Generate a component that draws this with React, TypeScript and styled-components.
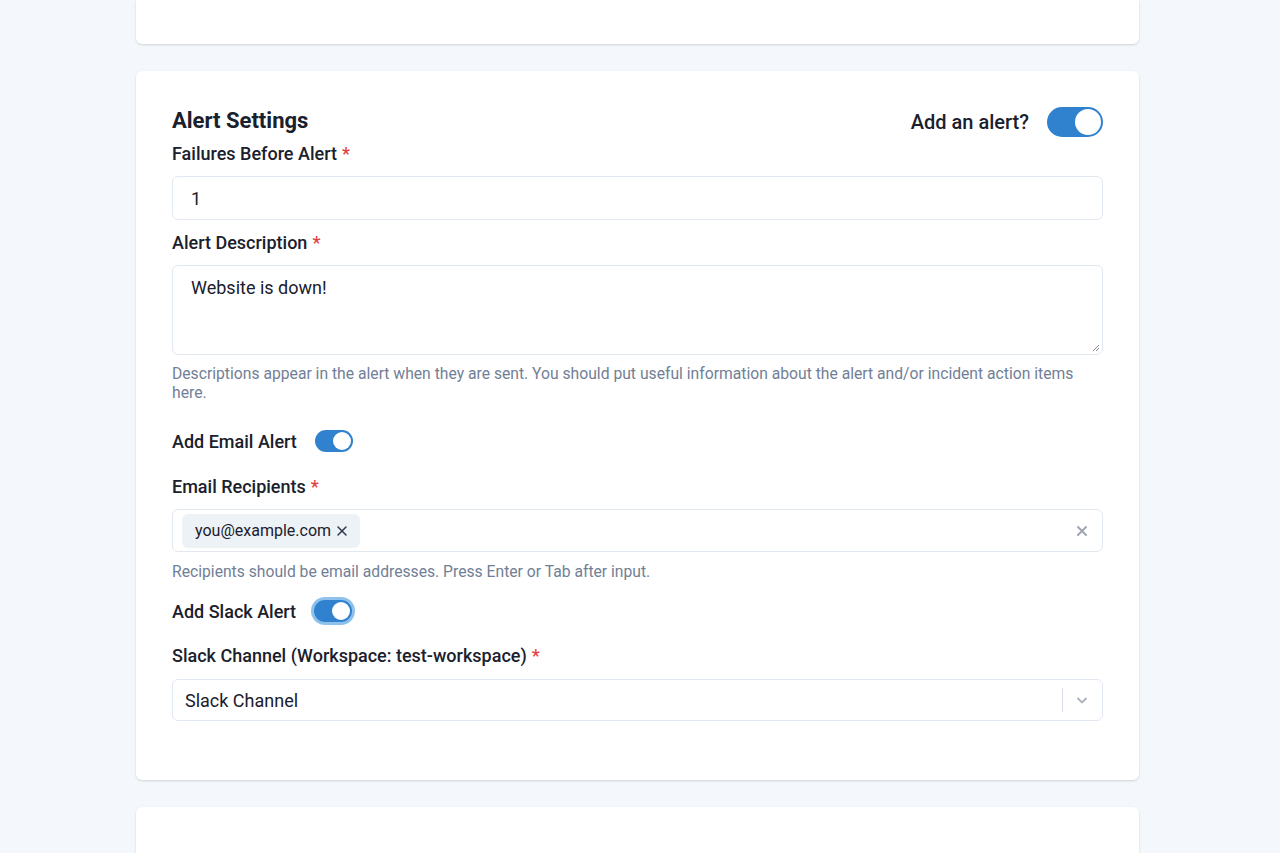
import React from "react";
import styled, { createGlobalStyle } from "styled-components";

const Global = createGlobalStyle`
  html, body { margin: 0; padding: 0; background: #f4f7fb; }
  body { font-family: Roboto, "Noto Sans", Arial, sans-serif; color: #1a202c; }
  * { box-sizing: border-box; }
`;

const Page = styled.div`
  display: flex;
  flex-direction: column;
  gap: 27px;
  padding-left: 136px;
  width: 1280px;
  height: 853px;
  overflow: hidden;
`;

const Card = styled.div<{ $h?: number; $top?: boolean }>`
  width: 1003px;
  flex: none;
  background: #fff;
  border-radius: ${(p) => (p.$top ? "0 0 6px 6px" : "6px")};
  box-shadow: 0 1px 3px rgba(0, 0, 0, 0.1), 0 1px 2px rgba(0, 0, 0, 0.06);
  ${(p) => (p.$h ? `height: ${p.$h}px;` : "")}
`;

const Body = styled.div`
  padding: 36px 36px 59px;
  display: flex;
  flex-direction: column;
`;

const Header = styled.div`
  display: flex;
  align-items: center;
  justify-content: space-between;
  height: 30px;
`;

const Title = styled.h2`
  margin: 0;
  font-size: 22px;
  font-weight: 700;
  line-height: 28px;
  margin-top: -3px;
  color: #1a202c;
`;

const HeaderRight = styled.div`
  display: flex;
  align-items: center;
  gap: 18px;
`;

const BigLabel = styled.span`
  font-size: 20px;
  font-weight: 500;
  color: #1a202c;
`;

const Track = styled.span<{ $size: "lg" | "md"; $focus?: boolean }>`
  display: inline-flex;
  align-items: center;
  justify-content: flex-end;
  width: ${(p) => (p.$size === "lg" ? 56 : 38)}px;
  height: ${(p) => (p.$size === "lg" ? 30 : 22)}px;
  padding: 2px;
  border-radius: 999px;
  background: #3182ce;
  box-shadow: ${(p) => (p.$focus ? "0 0 0 3px rgba(66, 153, 225, 0.6)" : "none")};
`;

const Thumb = styled.span<{ $size: "lg" | "md" }>`
  width: ${(p) => (p.$size === "lg" ? 26 : 18)}px;
  height: ${(p) => (p.$size === "lg" ? 26 : 18)}px;
  border-radius: 50%;
  background: #fff;
`;

const Label = styled.div<{ $mt: number; $mb?: number }>`
  font-size: 18px;
  font-weight: 500;
  line-height: 24px;
  margin-top: ${(p) => p.$mt}px;
  margin-bottom: ${(p) => p.$mb ?? 11}px;
  color: #1a202c;
`;

const Req = styled.span`
  color: #e53e3e;
  margin-left: 5px;
`;

const Field = styled.div<{ $h: number }>`
  height: ${(p) => p.$h}px;
  border: 1px solid #e2e8f0;
  border-radius: 6px;
  background: #fff;
  display: flex;
  align-items: center;
  font-size: 18px;
  color: #1a202c;
`;

const InputText = styled.span`
  padding-left: 18px;
`;

const TextArea = styled.div`
  position: relative;
  height: 90px;
  border: 1px solid #e2e8f0;
  border-radius: 6px;
  padding: 10px 18px;
  font-size: 18px;
  line-height: 24px;
  color: #1a202c;
`;

const Grip = styled.svg`
  position: absolute;
  right: 2px;
  bottom: 2px;
`;

const Help = styled.div<{ $mt?: number }>`
  margin-top: ${(p) => p.$mt ?? 9}px;
  font-size: 15.7px;
  line-height: 19px;
  color: #718096;
`;

const ToggleRow = styled.div<{ $mt: number; $h: number }>`
  display: flex;
  align-items: center;
  gap: 18px;
  margin-top: ${(p) => p.$mt}px;
  height: ${(p) => p.$h}px;
`;

const RowLabel = styled.span`
  font-size: 18px;
  font-weight: 500;
  color: #1a202c;
`;

const Multi = styled(Field)`
  padding: 0 14px 0 9px;
  justify-content: space-between;
`;

const Chip = styled.span`
  display: inline-flex;
  align-items: center;
  gap: 5px;
  height: 34px;
  padding: 0 12px 0 13px;
  border-radius: 6px;
  background: #edf2f7;
  font-size: 16px;
  color: #1a202c;
`;

const SelectBox = styled(Field)`
  padding-left: 12px;
  justify-content: space-between;
`;

const Indicators = styled.div`
  display: flex;
  align-items: center;
  height: 100%;
`;

const Sep = styled.span`
  width: 1px;
  height: 24px;
  background: #d9dee6;
`;

const Chevron = styled.span`
  display: flex;
  align-items: center;
  padding: 0 13px 0 12px;
`;

const X = ({ size, color, w }: { size: number; color: string; w: number }) => (
  <svg width={size} height={size} viewBox="0 0 12 12">
    <path d="M2 2 L10 10 M10 2 L2 10" stroke={color} strokeWidth={w} strokeLinecap="round" />
  </svg>
);

const Toggle = ({ size, focus }: { size: "lg" | "md"; focus?: boolean }) => (
  <Track $size={size} $focus={focus}>
    <Thumb $size={size} />
  </Track>
);

export default function App() {
  return (
    <>
      <Global />
      <Page>
        <Card $h={44} $top />
        <Card>
          <Body>
            <Header>
              <Title>Alert Settings</Title>
              <HeaderRight>
                <BigLabel>Add an alert?</BigLabel>
                <Toggle size="lg" />
              </HeaderRight>
            </Header>
            <Label $mt={5} $mb={10}>
              Failures Before Alert<Req>*</Req>
            </Label>
            <Field $h={44}>
              <InputText>1</InputText>
            </Field>
            <Label $mt={11} $mb={10}>
              Alert Description<Req>*</Req>
            </Label>
            <TextArea>
              Website is down!
              <Grip width="10" height="10" viewBox="0 0 10 10">
                <path d="M9 3 L3 9 M9 6 L6 9" stroke="#8a8a8a" strokeWidth="1" />
              </Grip>
            </TextArea>
            <Help>
              Descriptions appear in the alert when they are sent. You should put useful information about the alert
              and/or incident action items here.
            </Help>
            <ToggleRow $mt={27} $h={24}>
              <RowLabel>Add Email Alert</RowLabel>
              <Toggle size="md" />
            </ToggleRow>
            <Label $mt={22} $mb={10}>
              Email Recipients<Req>*</Req>
            </Label>
            <Multi $h={43}>
              <Chip>
                you@example.com
                <X size={12} color="#2d3748" w={1.5} />
              </Chip>
              <X size={12} color="#a0a7b1" w={2} />
            </Multi>
            <Help $mt={10}>Recipients should be email addresses. Press Enter or Tab after input.</Help>
            <ToggleRow $mt={16} $h={28}>
              <RowLabel>Add Slack Alert</RowLabel>
              <Toggle size="md" focus />
            </ToggleRow>
            <Label $mt={19}>
              Slack Channel (Workspace: test-workspace)<Req>*</Req>
            </Label>
            <SelectBox $h={42}>
              <span>Slack Channel</span>
              <Indicators>
                <Sep />
                <Chevron>
                  <svg width="14" height="14" viewBox="0 0 14 14">
                    <path d="M2.5 5 L7 9.5 L11.5 5" stroke="#aab1bb" strokeWidth="1.8" fill="none" />
                  </svg>
                </Chevron>
              </Indicators>
            </SelectBox>
          </Body>
        </Card>
        <Card $h={100} />
      </Page>
    </>
  );
}
